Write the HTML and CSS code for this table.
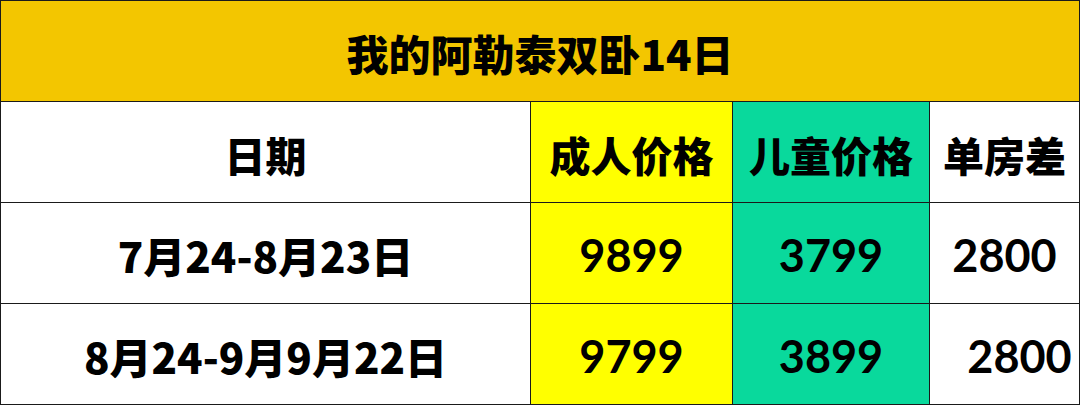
FILE: index.html
```html
<!DOCTYPE html>
<html lang="zh">
<head>
<meta charset="utf-8">
<link rel="stylesheet" href="styles.css">
</head>
<body>
<div class="sheet">
  <div class="cell title">我的阿勒泰双卧14日</div>

  <div class="cell head">日期</div>
  <div class="cell head adult">成人价格</div>
  <div class="cell head child">儿童价格</div>
  <div class="cell head">单房差</div>

  <div class="cell date">7月24-8月23日</div>
  <div class="cell num adult">9899</div>
  <div class="cell num child">3799</div>
  <div class="cell num">2800</div>

  <div class="cell date">8月24-9月9月22日</div>
  <div class="cell num adult">9799</div>
  <div class="cell num child">3899</div>
  <div class="cell num shift">2800</div>
</div>
</body>
</html>
```

FILE: styles.css
```css
html, body {
  margin: 0;
  padding: 0;
  background: #ffffff;
}

.sheet {
  box-sizing: border-box;
  width: 1080px;
  height: 405px;
  display: grid;
  grid-template-columns: 530px 202px 197px 150px;
  grid-template-rows: 101px 101px 101px 101px;
  border-left: 1px solid #1a1a1a;
  border-top: 1px solid #1a1a1a;
  font-family: "Noto Sans CJK SC", "Noto Sans", sans-serif;
  font-weight: 900;
  color: #000;
}

.cell {
  box-sizing: border-box;
  border-right: 1px solid #1a1a1a;
  border-bottom: 1px solid #1a1a1a;
  display: flex;
  align-items: center;
  justify-content: center;
  background: #ffffff;
  line-height: 1;
}

.title {
  grid-column: 1 / 5;
  background: #f3c600;
  font-size: 42px;
  padding-top: 4px;
}

.head {
  font-size: 41px;
  padding-top: 4px;
}

.date {
  font-size: 42px;
  padding-top: 4px;
}

.num {
  font-family: "Lato", "Noto Sans", sans-serif;
  font-weight: 700;
  font-size: 45px;
  padding-top: 4px;
}

.adult {
  background: #ffff00;
}

.child {
  background: #09d99c;
}

.shift {
  padding-left: 30px;
}
```
